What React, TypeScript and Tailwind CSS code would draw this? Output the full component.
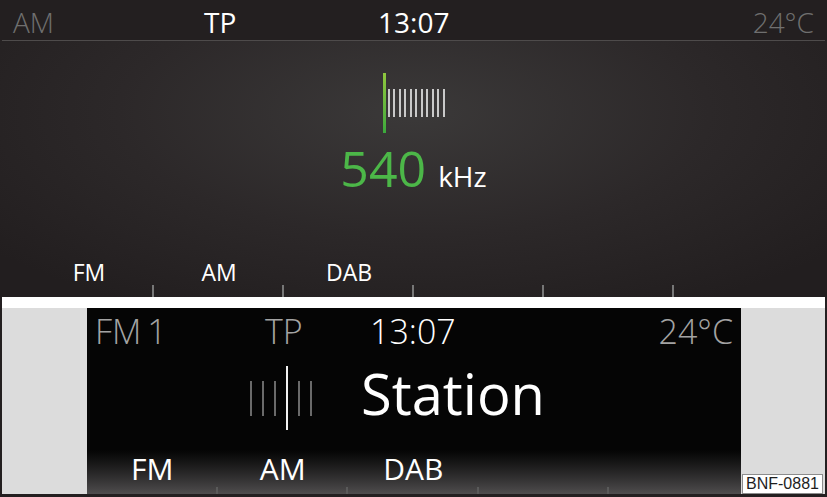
import React from "react";

function FreqIcon() {
  const ticks = Array.from({ length: 11 });
  return (
    <div className="h-[60px] flex items-center">
      <div className="w-[3px] h-[60px] bg-linear-to-b from-[#8fc73e] to-[#3aa93c]" />
      <div className="ml-[2px] flex items-center gap-[3.5px]">
        {ticks.map((_, i) => (
          <div key={i} className="w-[2px] h-[28px] bg-[#c9c9c9]" />
        ))}
      </div>
    </div>
  );
}

function StationIcon() {
  return (
    <div className="h-[64px] flex items-center gap-[10px]">
      <div className="w-[2px] h-[35px] bg-[#6a6a6a]" />
      <div className="w-[2px] h-[35px] bg-[#6a6a6a]" />
      <div className="w-[2px] h-[35px] bg-[#6a6a6a]" />
      <div className="w-[2px] h-[64px] bg-[#f2f2f2]" />
      <div className="w-[2px] h-[35px] bg-[#6a6a6a]" />
      <div className="w-[2px] h-[35px] bg-[#6a6a6a]" />
    </div>
  );
}

export default function App() {
  const topBands = ["FM", "AM", "DAB", "", ""];
  const bottomBands = ["FM", "AM", "DAB", "", ""];
  return (
    <div className="w-[827px] h-[497px] bg-[#231f20] flex flex-col overflow-hidden font-['Open_Sans',sans-serif] font-normal">
      {/* upper screen */}
      <div className="h-[297px] flex flex-col bg-[radial-gradient(ellipse_65%_75%_at_50%_38%,#3b3939_0%,#2c2829_55%,#221e1f_100%)]">
        <div className="h-[40px] bg-[#231f20] flex items-start pt-[8px] px-[13px] text-[28px] leading-none">
          <span className="w-[191px] text-[#6f6f6f] font-light">AM</span>
          <span className="w-[174px] text-white">TP</span>
          <span className="text-white">13:07</span>
          <span className="flex-1" />
          <span className="text-[#6f6f6f] font-light">24°C</span>
        </div>
        <div className="h-px mx-[2px] bg-[#4e4b4b]" />
        <div className="flex-1 flex flex-col items-center pt-[32px]">
          <FreqIcon />
          <div className="mt-[10px] flex items-baseline leading-none">
            <span className="text-[50px] text-[#4cb748]">540</span>
            <span className="ml-[12px] text-[28px] text-white">kHz</span>
          </div>
        </div>
        <div className="h-[36px] flex pl-[24px]">
          {topBands.map((b, i) => (
            <div key={i} className="w-[130px] flex flex-col">
              <span className="self-center text-[23px] leading-none text-white h-[23px]">{b}</span>
              <div className="mt-auto self-end w-[2px] h-[12px] bg-[#777]" />
            </div>
          ))}
        </div>
      </div>

      {/* white band */}
      <div className="h-[11px] mx-[2px] bg-white" />

      {/* lower screen */}
      <div className="h-[186px] flex px-[2px]">
        <div className="w-[85px] bg-[#dcdcdc]" />
        <div className="w-[654px] bg-[#050505] flex flex-col">
          <div className="h-[40px] pt-[6px] px-[8px] flex items-start text-[34px] leading-none">
            <span className="w-[170px] text-[#a3a3a3] font-light [word-spacing:-3px]">FM 1</span>
            <span className="w-[105px] text-[#a3a3a3] font-light">TP</span>
            <span className="text-white font-light">13:07</span>
            <span className="flex-1" />
            <span className="text-[#a3a3a3] font-light">24°C</span>
          </div>
          <div className="mt-[17px] h-[85px] flex items-start">
            <div className="ml-[163px] mt-[1px]">
              <StationIcon />
            </div>
            <span className="ml-[49px] text-[56px] leading-none text-white">Station</span>
          </div>
          <div className="h-[44px] flex bg-linear-to-b from-[#050505] to-[#4f4d4e]">
            {bottomBands.map((b, i) => (
              <div key={i} className="w-[130.5px] flex flex-col">
                <span className="self-center pt-[4px] text-[30px] leading-none text-white">{b}</span>
                {i < 4 && <div className="mt-auto self-end w-[2px] h-[7px] bg-[#5a5a5a]" />}
              </div>
            ))}
          </div>
        </div>
        <div className="w-[84px] bg-[#dcdcdc] flex flex-col justify-end pl-[1px]">
          <div className="w-[81px] h-[20px] bg-white border border-[#8c8c8c] flex items-center pl-[3px] text-[16px] leading-none text-[#1e1e1e] font-normal font-['Liberation_Sans',Arial,sans-serif]">
            BNF-0881
          </div>
        </div>
      </div>
    </div>
  );
}
